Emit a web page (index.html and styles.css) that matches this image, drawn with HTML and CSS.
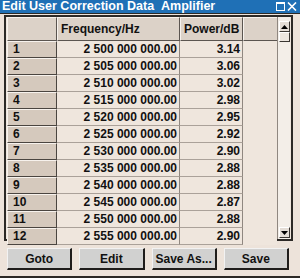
FILE: index.html
```html
<!DOCTYPE html>
<html lang="en">
<head>
    <meta charset="UTF-8">
    <title>Edit User Correction Data Amplifier</title>
    <link rel="stylesheet" href="styles.css">
</head>
<body>
    <div class="window">
        <div class="titlebar">
            <span class="title">Edit User Correction Data&nbsp;&nbsp;Amplifier</span>
            <span class="controls">
                <svg width="9" height="9" viewBox="0 0 9 9"><rect x="0.5" y="0.5" width="8" height="8" fill="none" stroke="#fff"/><line x1="0" y1="1.5" x2="9" y2="1.5" stroke="#fff"/></svg>
                <svg width="10" height="9" viewBox="0 0 10 9"><path d="M1 0.5 L9 8.5 M9 0.5 L1 8.5" stroke="#fff" stroke-width="1.6"/></svg>
            </span>
        </div>

        <div class="view">
            <table class="grid">
                <colgroup>
                    <col class="c-idx">
                    <col class="c-freq">
                    <col class="c-pow">
                    <col class="c-rest">
                </colgroup>
                <thead>
                    <tr>
                        <th class="idx"></th>
                        <th>Frequency/Hz</th>
                        <th>Power/dB</th>
                        <th class="rest"></th>
                    </tr>
                </thead>
                <tbody>
                    <tr><td class="idx">1</td><td class="num">2 500 000 000.00</td><td class="num">3.14</td><td class="rest"></td></tr>
                    <tr><td class="idx">2</td><td class="num">2 505 000 000.00</td><td class="num">3.06</td><td class="rest"></td></tr>
                    <tr><td class="idx">3</td><td class="num">2 510 000 000.00</td><td class="num">3.02</td><td class="rest"></td></tr>
                    <tr><td class="idx">4</td><td class="num">2 515 000 000.00</td><td class="num">2.98</td><td class="rest"></td></tr>
                    <tr><td class="idx">5</td><td class="num">2 520 000 000.00</td><td class="num">2.95</td><td class="rest"></td></tr>
                    <tr><td class="idx">6</td><td class="num">2 525 000 000.00</td><td class="num">2.92</td><td class="rest"></td></tr>
                    <tr><td class="idx">7</td><td class="num">2 530 000 000.00</td><td class="num">2.90</td><td class="rest"></td></tr>
                    <tr><td class="idx">8</td><td class="num">2 535 000 000.00</td><td class="num">2.88</td><td class="rest"></td></tr>
                    <tr><td class="idx">9</td><td class="num">2 540 000 000.00</td><td class="num">2.88</td><td class="rest"></td></tr>
                    <tr><td class="idx">10</td><td class="num">2 545 000 000.00</td><td class="num">2.87</td><td class="rest"></td></tr>
                    <tr><td class="idx">11</td><td class="num">2 550 000 000.00</td><td class="num">2.88</td><td class="rest"></td></tr>
                    <tr><td class="idx">12</td><td class="num">2 555 000 000.00</td><td class="num">2.90</td><td class="rest"></td></tr>
                </tbody>
            </table>
            <div class="scrollbar">
                <div class="sb-btn"><svg width="7" height="4" viewBox="0 0 7 4"><path d="M3.5 0 L7 4 L0 4 Z" fill="#000"/></svg></div>
                <div class="sb-thumb"></div>
                <div class="sb-track"></div>
                <div class="sb-btn"><svg width="7" height="4" viewBox="0 0 7 4"><path d="M0 0 L7 0 L3.5 4 Z" fill="#000"/></svg></div>
            </div>
        </div>

        <div class="buttons">
            <button>Goto</button>
            <button>Edit</button>
            <button>Save As...</button>
            <button>Save</button>
        </div>
    </div>
</body>
</html>
```

FILE: styles.css
```css
body {
    margin: 0;
    font-family: "Liberation Sans", Arial, sans-serif;
    background-color: #ede3da;
}
.window {
    width: 300px;
    height: 278px;
    box-sizing: border-box;
    background-color: #ede3da;
    border-bottom: 2px solid #2c2926;
    display: flex;
    flex-direction: column;
}
.titlebar {
    height: 13px;
    background-color: #1f70b6;
    border-bottom: 1px solid #2c2926;
    display: flex;
    align-items: center;
    justify-content: space-between;
    color: #fff;
}
.title {
    font-size: 12.5px;
    font-weight: bold;
    line-height: 13px;
    padding-left: 2px;
    white-space: nowrap;
}
.controls {
    display: flex;
    align-items: center;
    gap: 2px;
    padding-right: 3px;
}
.view {
    margin: 1px 7px 0 4px;
    border: 2px solid #2c2926;
    padding: 0 1px;
    height: 222px;
    display: flex;
    background-color: #efe6dd;
}
.grid {
    width: 270px;
    table-layout: fixed;
    border-collapse: separate;
    border-spacing: 0;
    font-size: 12px;
    font-weight: bold;
    color: #111;
    align-self: flex-start;
}
.c-idx { width: 50px; }
.c-freq { width: 123px; }
.c-pow { width: 63px; }
.c-rest { width: 34px; }
.grid th {
    height: 24px;
    box-sizing: border-box;
    padding: 0 0 0 3px;
    text-align: left;
    background-color: #dcd2c8;
    border-top: 1px solid #f7f2ed;
    border-left: 1px solid #f7f2ed;
    border-right: 1px solid #5b5550;
    border-bottom: 1px solid #5b5550;
}
.grid th.rest {
    border-right: none;
}
.grid td {
    height: 16.5px;
    box-sizing: border-box;
    padding: 0;
    line-height: 15px;
    background-color: #efe6dd;
    border-bottom: 1px solid #aaa199;
    border-right: 1px solid #8f8780;
}
.grid td.num {
    text-align: right;
    padding-right: 2px;
}
.grid td.idx {
    padding-left: 5px;
    background-color: #d5c9bd;
    border-top: 1px solid #f7f2ed;
    border-left: 1px solid #f7f2ed;
    border-right: 1px solid #4a4540;
    border-bottom: 1px solid #4a4540;
}
.grid td.rest {
    border: none;
}
.scrollbar {
    width: 13px;
    border-left: 1px solid #8f8780;
    background-color: #f3eee8;
    display: flex;
    flex-direction: column;
    align-items: center;
    padding: 4px 0 1px;
    box-sizing: border-box;
}
.sb-btn, .sb-thumb {
    width: 11px;
    height: 11px;
    box-sizing: border-box;
    background-color: #e4ddd6;
    border-top: 1px solid #fff;
    border-left: 1px solid #fff;
    border-right: 1px solid #3a3632;
    border-bottom: 1px solid #3a3632;
    display: flex;
    align-items: center;
    justify-content: center;
}
.sb-thumb {
    height: 10px;
    background-color: #ece6df;
}
.sb-track {
    flex: 1;
}
.buttons {
    display: grid;
    grid-template-columns: repeat(4, 1fr);
    gap: 7px;
    margin: 7px 11px 0 7px;
}
button {
    height: 22px;
    padding: 0;
    font-family: "Liberation Sans", Arial, sans-serif;
    font-size: 12px;
    font-weight: bold;
    color: #111;
    background-color: #d1d1d0;
    border-top: 1px solid #f2f2f2;
    border-left: 1px solid #f2f2f2;
    border-right: 2px solid #1f1d1b;
    border-bottom: 2px solid #1f1d1b;
}
```
